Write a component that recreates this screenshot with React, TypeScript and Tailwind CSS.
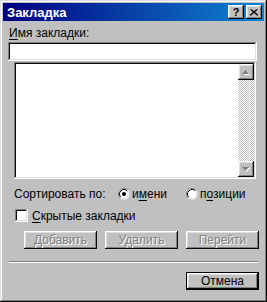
import React from 'react';

const raised =
  'shadow-[inset_-1px_-1px_#0a0a0a,inset_1px_1px_#ffffff,inset_-2px_-2px_#808080,inset_2px_2px_#dfdfdf]';
const sunken =
  'shadow-[inset_-1px_-1px_#ffffff,inset_1px_1px_#808080,inset_-2px_-2px_#dfdfdf,inset_2px_2px_#0a0a0a]';

function Radio({ checked }: { checked?: boolean }) {
  return (
    <svg width="12" height="12" viewBox="0 0 12 12" className="shrink-0">
      <circle cx="6" cy="6" r="5.5" fill="#fff" />
      <path d="M2.11 9.89 A5.5 5.5 0 0 1 9.89 2.11" fill="none" stroke="#808080" />
      <path d="M2.82 9.18 A4.5 4.5 0 0 1 9.18 2.82" fill="none" stroke="#0a0a0a" />
      <path d="M9.18 2.82 A4.5 4.5 0 0 1 2.82 9.18" fill="none" stroke="#dfdfdf" />
      {checked && <circle cx="6" cy="6" r="2" fill="#000" />}
    </svg>
  );
}

function Arrow({ up }: { up?: boolean }) {
  return (
    <svg width="8" height="5" viewBox="0 0 8 5">
      {up ? (
        <>
          <path d="M1 5 L4 1 L7 5 Z" fill="#fff" transform="translate(1,0)" />
          <path d="M0 4 L3.5 0 L7 4 Z" fill="#808080" />
        </>
      ) : (
        <>
          <path d="M1 1 L8 1 L4.5 5 Z" fill="#fff" />
          <path d="M0 0 L7 0 L3.5 4 Z" fill="#808080" />
        </>
      )}
    </svg>
  );
}

function ScrollButton({ up }: { up?: boolean }) {
  return (
    <div className={`flex h-4 w-4 items-center justify-center bg-[#c0c0c0] ${raised}`}>
      <Arrow up={up} />
    </div>
  );
}

function Btn({ label, disabled, isDefault }: { label: string; disabled?: boolean; isDefault?: boolean }) {
  return (
    <div
      className={`flex h-[18px] w-[73px] items-center justify-center ${isDefault ? 'border border-black' : ''}`}
    >
      <div className={`flex h-full w-full items-center justify-center bg-[#c0c0c0] ${raised}`}>
        <span
          className={
            disabled
              ? 'text-[12px] leading-[14px] text-[#808080] [text-shadow:1px_1px_0_#ffffff]'
              : 'text-[12px] leading-[14px] text-black'
          }
        >
          {label}
        </span>
      </div>
    </div>
  );
}

export default function App() {
  return (
    <div className="h-[302px] w-[267px] bg-[#c0c0c0] font-['Liberation_Sans',Arial,sans-serif] text-black">
      <div
        className={`flex h-full w-full flex-col p-[3px] shadow-[inset_-1px_-1px_#0a0a0a,inset_1px_1px_#dfdfdf,inset_-2px_-2px_#808080,inset_2px_2px_#ffffff]`}
      >
        {/* Title bar */}
        <div className="flex h-[18px] items-center bg-[linear-gradient(90deg,#000080,#1084d0)] pl-[4px] pr-[2px]">
          <span className="flex-1 text-[13px] font-bold leading-[15px] text-white">Закладка</span>
          <div className={`flex h-[14px] w-[16px] items-center justify-center bg-[#c0c0c0] ${raised}`}>
            <span className="text-[11px] font-bold leading-[12px]">?</span>
          </div>
          <div className={`ml-[2px] flex h-[14px] w-[16px] items-center justify-center bg-[#c0c0c0] ${raised}`}>
            <svg width="8" height="7" viewBox="0 0 8 7">
              <path d="M0.5 0.5 L7.5 6.5 M1.5 0.5 L8.5 6.5 M7.5 0.5 L0.5 6.5 M6.5 0.5 L-0.5 6.5" stroke="#000" strokeWidth="1" />
            </svg>
          </div>
        </div>

        {/* Body */}
        <div className="ml-[6px] mt-[5px] h-[14px] text-[12px] leading-[14px]">
          <span className="underline underline-offset-2">И</span>мя закладки:
        </div>
        <div className={`ml-[5px] mt-[2px] h-[19px] w-[249px] bg-white ${sunken}`} />

        <div className={`ml-[11px] mt-[1px] flex h-[117px] w-[242px] bg-white p-[2px] ${sunken}`}>
          <div className="flex-1" />
          <div className="flex w-4 flex-col">
            <ScrollButton up />
            <div className="flex-1 bg-[conic-gradient(#ffffff_25%,#c0c0c0_0_50%,#ffffff_0_75%,#c0c0c0_0)] bg-[length:2px_2px]" />
            <ScrollButton />
          </div>
        </div>

        <div className="ml-[11px] mt-[8px] flex h-[14px] items-center text-[12px] leading-[14px]">
          <span className="w-[104px]">Сортировать по:</span>
          <Radio checked />
          <span className="ml-[2px] w-[54px]">
            и<span className="underline underline-offset-2">м</span>ени
          </span>
          <Radio />
          <span className="ml-[2px]">
            п<span className="underline underline-offset-2">о</span>зиции
          </span>
        </div>

        <div className="ml-[12px] mt-[8px] flex h-[13px] items-center text-[12px] leading-[14px]">
          <div className={`h-[13px] w-[13px] bg-white ${sunken}`} />
          <span className="ml-[4px]">
            <span className="underline underline-offset-2">С</span>крытые закладки
          </span>
        </div>

        <div className="ml-[21px] mt-[9px] flex gap-[8px]">
          <Btn label="Добавить" disabled />
          <Btn label="Удалить" disabled />
          <Btn label="Перейти" disabled />
        </div>

        <div className="ml-[6px] mt-[12px] h-[2px] w-[249px] border-b border-t border-b-white border-t-[#808080]" />

        <div className="ml-[183px] mt-[9px]">
          <div className="h-[19px]">
            <Btn label="Отмена" isDefault />
          </div>
        </div>
      </div>
    </div>
  );
}
